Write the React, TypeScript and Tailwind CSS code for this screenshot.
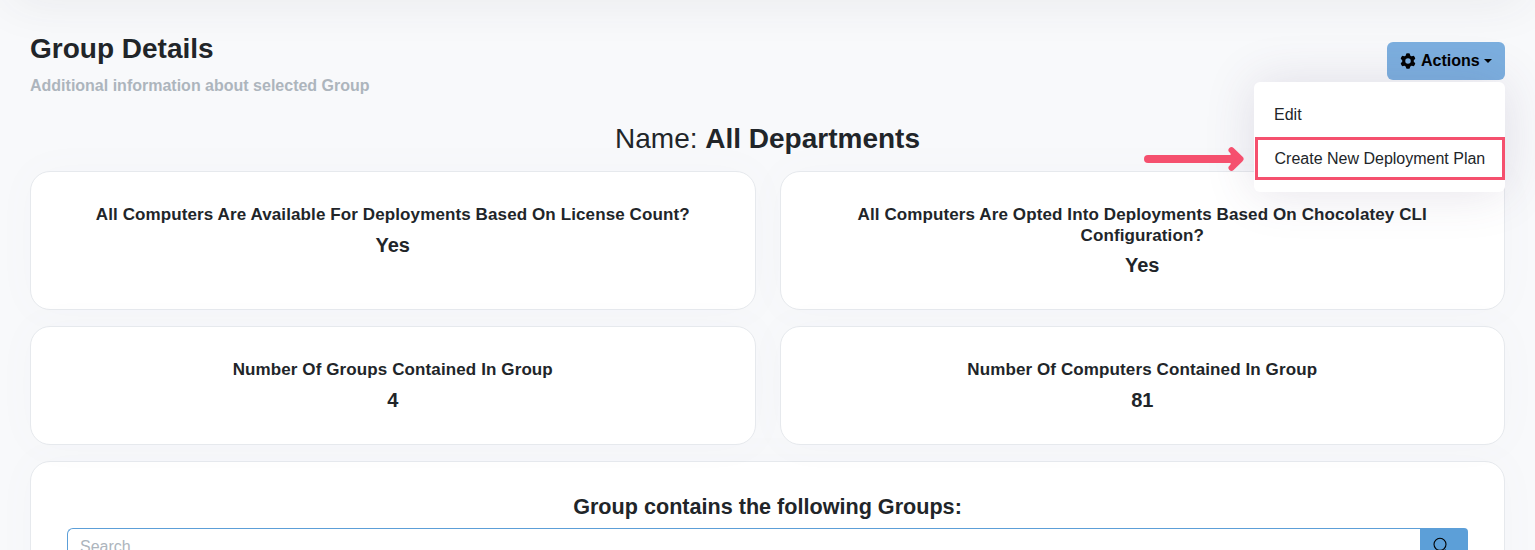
const toothAngles = [0, 60, 120, 180, 240, 300];

function GearIcon() {
  return (
    <svg width="16" height="16" viewBox="-8 -8 16 16" aria-hidden="true">
      <circle r="4.3" fill="none" stroke="black" strokeWidth="3.1" />
      {toothAngles.map((angle) => (
        <path key={angle} d="M-2.4 -5L-1.7 -7.4Q0 -8.1 1.7 -7.4L2.4 -5Z" transform={`rotate(${angle})`} />
      ))}
    </svg>
  );
}

function StatCard({ title, value }: { title: string; value: string }) {
  return (
    <section className="rounded-[20px] border border-[#e6e9ed] bg-white px-[60px] pt-[33px] text-center shadow-[0_0_40px_rgba(120,125,145,0.03)]">
      <h3 className="text-[17px] leading-[20.6px] font-bold tracking-[0.11px]">{title}</h3>
      <p className="mt-[7px] text-[20px] leading-[24px] font-bold">{value}</p>
    </section>
  );
}

function ActionsMenu() {
  return (
    <div className="relative mt-[42px] h-[38px]">
      <button className="flex h-[38px] w-[118px] items-center rounded-[6px] bg-[#7cafdf] pl-[13px] text-[16px] font-bold text-black">
        <GearIcon />
        <span className="ml-[5px]">Actions</span>
        <span className="ml-[4px] border-x-[4px] border-t-[4px] border-x-transparent border-t-black" />
      </button>
      <div className="absolute top-[40px] right-0 z-10 h-[110px] w-[251px] rounded-[6px] bg-white pt-[11px] text-[16px] shadow-[0_0_50px_rgba(82,63,105,0.15)]">
        <div className="flex h-[43px] items-center pl-[20px]">Edit</div>
        <div className="mt-px ml-px flex h-[43px] w-[250px] items-center border-[3px] border-[#f5506e] pl-[16.5px] whitespace-nowrap">
          Create New Deployment Plan
        </div>
        <svg className="absolute top-[64px] left-[-110px]" width="102" height="26" viewBox="0 0 102 26" fill="none" stroke="#f5506e" strokeLinecap="round" strokeLinejoin="round">
          <path d="M4 13H94" strokeWidth="8" />
          <path d="M87.5 4.2L96.5 13L87.5 21.8" strokeWidth="6" />
          <path d="M88 8L96 13L88 18" strokeWidth="3" />
        </svg>
      </div>
    </div>
  );
}

export default function App() {
  return (
    <div className="relative h-[550px] overflow-hidden bg-[#f8f9fb] font-['Liberation_Sans',Arial,sans-serif] text-[#212529]">
      <div className="absolute inset-x-[10px] -top-[40px] h-[40px] shadow-[0_0_50px_rgba(60,60,65,0.09)]" />
      <main className="relative px-[30px]">
        <header className="flex h-[122px] justify-between">
          <div className="pt-[32px]">
            <h1 className="text-[28px] leading-[34px] font-bold">Group Details</h1>
            <p className="mt-[10px] text-[16px] leading-[20px] font-bold text-[#adb5bd]">Additional information about selected Group</p>
          </div>
          <ActionsMenu />
        </header>
        <h2 className="h-[49px] text-center text-[28px] leading-[34px]">
          Name: <strong>All Departments</strong>
        </h2>
        <div className="grid grid-cols-2 grid-rows-[139px_119px] gap-x-6 gap-y-4">
          <StatCard title="All Computers Are Available For Deployments Based On License Count?" value="Yes" />
          <StatCard title="All Computers Are Opted Into Deployments Based On Chocolatey CLI Configuration?" value="Yes" />
          <StatCard title="Number Of Groups Contained In Group" value="4" />
          <StatCard title="Number Of Computers Contained In Group" value="81" />
        </div>
        <section className="mt-4 h-[300px] rounded-[20px] border border-[#e6e9ed] bg-white px-[36px] pt-[31px] shadow-[0_0_40px_rgba(120,125,145,0.03)]">
          <h2 className="text-center text-[21.6px] leading-[27px] font-bold">Group contains the following Groups:</h2>
          <div className="mt-[8px] flex h-[38px]">
            <input placeholder="Search" className="min-w-0 flex-1 rounded-l-[6px] border border-r-0 border-[#5c9fd8] bg-white px-[12px] text-[16px] outline-none placeholder:text-[#adb5bd]" />
            <button aria-label="Search" className="w-[48px] rounded-r-[4px] bg-[#5c9fd8] pl-[13px]">
              <svg width="20" height="20" viewBox="0 0 20 20" fill="none" stroke="black" strokeWidth="1.1">
                <circle cx="7" cy="7.3" r="6" />
                <path d="M11.5 13L16 18" strokeWidth="2" />
              </svg>
            </button>
          </div>
        </section>
      </main>
    </div>
  );
}
